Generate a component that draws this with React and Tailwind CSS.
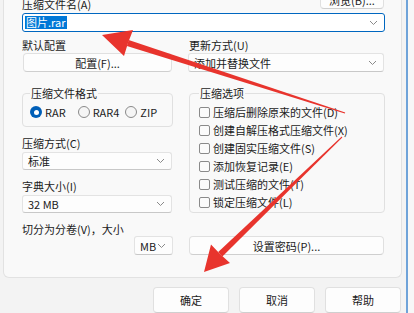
import React from "react";

const Chevron = () => (
  <svg width="9" height="6" viewBox="0 0 9 6" className="shrink-0">
    <path d="M1 1 L4.5 4.5 L8 1" fill="none" stroke="#8a8a8a" strokeWidth="1" />
  </svg>
);

const Dropdown = ({ text, className = "" }) => (
  <div
    className={`flex items-center justify-between h-[18px] bg-[#fdfdfd] border border-[#e3e3e3] border-b-[#c8c8c8] rounded-[3px] pl-[5px] pr-[6px] ${className}`}
  >
    <span className="leading-[14px]">{text}</span>
    <Chevron />
  </div>
);

const Button = ({ children, className = "" }) => (
  <div
    className={`flex items-center justify-center bg-[#fdfdfd] border border-[#e0e0e0] border-b-[#cfcfcf] rounded-[4px] ${className}`}
  >
    {children}
  </div>
);

const Radio = ({ checked, label, className = "" }) => (
  <div className={`flex items-center gap-[3px] ${className}`}>
    {checked ? (
      <span className="w-[12px] h-[12px] rounded-full bg-[#005fb8] flex items-center justify-center">
        <span className="w-[5px] h-[5px] rounded-full bg-white" />
      </span>
    ) : (
      <span className="w-[12px] h-[12px] rounded-full border border-[#8a8a8a] bg-[#f5f5f5]" />
    )}
    <span>{label}</span>
  </div>
);

const Check = ({ label }) => (
  <div className="flex items-center h-[18px] gap-[3px]">
    <span className="w-[11px] h-[11px] rounded-[2px] border border-[#8a8a8a] bg-[#fbfbfb]" />
    <span>{label}</span>
  </div>
);

const Arrows = () => (
  <svg className="absolute inset-0 pointer-events-none" width="414" height="313" viewBox="0 0 414 313">
    {/* arrow to filename */}
    <polygon points="345.2,112.5 344.8,113.5 126.9,45.9 128.7,40.1" fill="#e8342d" />
    <polygon points="102,35 133,30 128,43 124,56" fill="#e8342d" />
    {/* arrow to ok button */}
    <polygon points="342.3,137.4 341.7,136.6 218.2,252.1 222.4,256.5" fill="#e8342d" />
    <polygon points="204,272 211,244.5 220.3,254.3 230,263" fill="#e8342d" />
  </svg>
);

export default function App() {
  return (
    <div
      className="relative w-[414px] h-[313px] overflow-hidden bg-[#f3f3f3] text-[11px] leading-[14px] text-[#1b1b1b] flex"
      style={{ fontFamily: '"Noto Sans CJK SC", "Noto Sans", sans-serif' }}
    >
      <div className="w-[406px] flex flex-col">
        {/* main panel */}
        <div className="ml-[3px] w-[399px] h-[289px] -mt-[10px] bg-[#f9f9f9] border border-t-0 border-[#e2e2e2] rounded-b-[6px] pl-[18px] pr-[16px] flex flex-col">
          <div className="flex items-start justify-between h-[19px]">
            <span className="mt-[7px]">压缩文件名(A)</span>
            <Button className="w-[64px] h-[19px] mr-[1px]">浏览(B)...</Button>
          </div>
          <div className="mt-[4px] h-[19px] flex items-center justify-between bg-white border border-[#0067c0] rounded-[3px] pl-[2px] pr-[6px]">
            <span className="bg-[#0078d7] text-white px-[1px] leading-[13px]">图片.rar</span>
            <Chevron />
          </div>

          <div className="mt-[6px] flex">
            <span className="w-[167px]">默认配置</span>
            <span>更新方式(U)</span>
          </div>
          <div className="mt-[1px] flex">
            <Button className="ml-[1px] w-[149px] h-[19px]">配置(F)...</Button>
            <Dropdown text="添加并替换文件" className="ml-[16px] w-[196px] h-[19px]" />
          </div>

          <div className="flex mt-[14px]">
            {/* left column */}
            <div className="w-[151px] flex flex-col">
              <fieldset className="border border-[#e0e0e0] rounded-[4px] px-[7px] pb-[8px]">
                <legend className="px-[1px]">压缩文件格式</legend>
                <div className="flex items-center pt-[6px] h-[18px]">
                  <Radio checked label="RAR" />
                  <Radio label="RAR4" className="ml-[12px]" />
                  <Radio label="ZIP" className="ml-[6px]" />
                </div>
              </fieldset>
              <span className="mt-[9px]">压缩方式(C)</span>
              <Dropdown text="标准" className="mt-[2px] w-[150px]" />
              <span className="mt-[9px]">字典大小(I)</span>
              <Dropdown text="32 MB" className="mt-[2px] w-[150px]" />
              <span className="mt-[9px]">切分为分卷(V)，大小</span>
              <div className="flex justify-end">
                <Dropdown text="MB" className="w-[39px] h-[19px] pl-[3px] pr-[4px]" />
              </div>
            </div>

            {/* right column */}
            <div className="ml-[16px] w-[196px] flex flex-col">
              <fieldset className="border border-[#e0e0e0] rounded-[4px] pl-[9px] pt-[3px] pb-[1px]">
                <legend className="px-[1px]">压缩选项</legend>
                <Check label="压缩后删除原来的文件(D)" />
                <Check label="创建自解压格式压缩文件(X)" />
                <Check label="创建固实压缩文件(S)" />
                <Check label="添加恢复记录(E)" />
                <Check label="测试压缩的文件(T)" />
                <Check label="锁定压缩文件(L)" />
              </fieldset>
              <Button className="mt-[23px] w-[195px] h-[19px]">设置密码(P)...</Button>
            </div>
          </div>
        </div>

        {/* bottom buttons */}
        <div className="mt-[9px] flex justify-end gap-[10px] pr-[5px]">
          <Button className="w-[76px] h-[26px] border-[#0067c0] border-b-[#0067c0]">确定</Button>
          <Button className="w-[76px] h-[26px]">取消</Button>
          <Button className="w-[76px] h-[26px]">帮助</Button>
        </div>
      </div>
      <div className="w-[2px] bg-[#6fa3d9]" />
      <div className="flex-1 bg-[#f7f7f7]" />
      <Arrows />
    </div>
  );
}
